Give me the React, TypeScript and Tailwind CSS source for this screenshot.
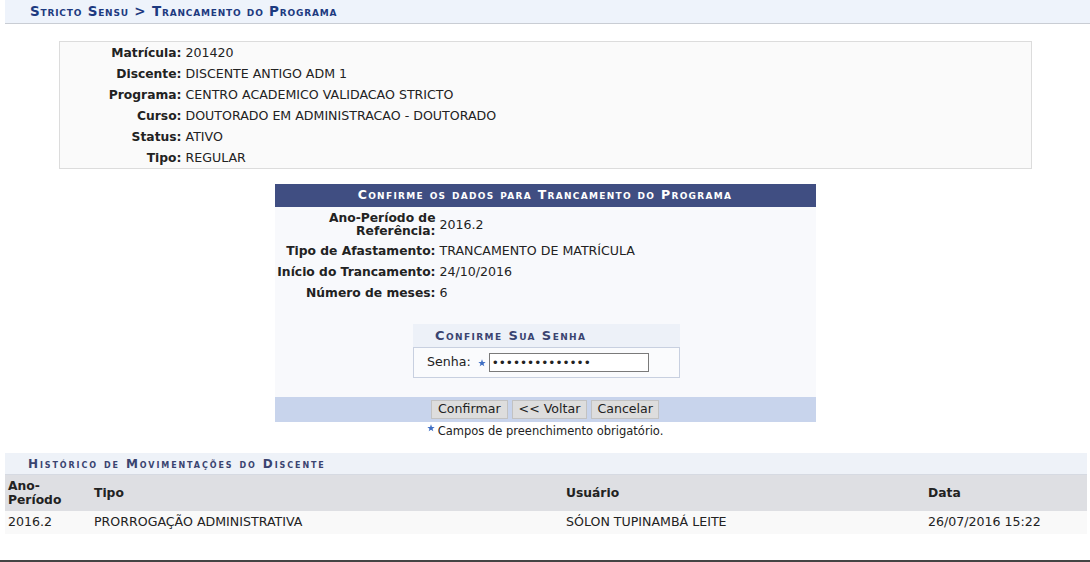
import React from "react";

const Star = ({ className = "" }: { className?: string }) => (
  <svg viewBox="0 0 10 10" className={className} width="8" height="8">
    <path d="M5 0.4 L6.2 3.6 L9.6 3.7 L6.9 5.8 L7.9 9.2 L5 7.2 L2.1 9.2 L3.1 5.8 L0.4 3.7 L3.8 3.6 Z" fill="#3f6fc4" />
  </svg>
);

const infoRows: [string, string][] = [
  ["Matrícula:", "201420"],
  ["Discente:", "DISCENTE ANTIGO ADM 1"],
  ["Programa:", "CENTRO ACADEMICO VALIDACAO STRICTO"],
  ["Curso:", "DOUTORADO EM ADMINISTRACAO - DOUTORADO"],
  ["Status:", "ATIVO"],
  ["Tipo:", "REGULAR"],
];

export default function App() {
  return (
    <div
      className="h-[562px] flex flex-col bg-white text-[12.6px] text-[#222]"
      style={{ fontFamily: '"DejaVu Sans", Verdana, sans-serif' }}
    >
      {/* Title bar */}
      <div className="ml-[5px] h-[24px] bg-[#eef3fb] border-b border-[#c9cdd4] flex items-center pl-[25px]">
        <span className="text-[13.5px] font-bold text-[#1d3a80] [font-variant:small-caps] tracking-[0.8px]">
          Stricto Sensu &gt; Trancamento do Programa
        </span>
      </div>

      <div className="mx-[5px] flex flex-col items-center">
        {/* Info box */}
        <div className="mt-[17px] w-[973px] bg-[#fafafa] border border-[#dcdcdc] pt-[1px] h-[128px]">
          {infoRows.map(([l, v]) => (
            <div key={l} className="h-[21px] flex items-center">
              <div className="w-[122px] text-right font-bold text-[12.3px]">{l}</div>
              <div className="pl-[4px]">{v}</div>
            </div>
          ))}
        </div>

        {/* Form */}
        <div className="mt-[15px] w-[541px] bg-[#f8f9fc] flex flex-col">
          <div className="h-[23px] bg-[#404e82] flex items-center justify-center">
            <span className="text-[12.5px] font-bold text-white [font-variant:small-caps] tracking-[1.3px]">
              Confirme os dados para Trancamento do Programa
            </span>
          </div>
          <div className="flex flex-col pt-[2px]">
            <div className="flex items-center py-[3px]">
              <div className="w-[161px] text-right font-bold text-[12.3px] leading-[13px]">
                Ano-Período de
                <br />
                Referência:
              </div>
              <div className="pl-[4px]">2016.2</div>
            </div>
            {[
              ["Tipo de Afastamento:", "TRANCAMENTO DE MATRÍCULA"],
              ["Início do Trancamento:", "24/10/2016"],
              ["Número de meses:", "6"],
            ].map(([l, v]) => (
              <div key={l} className="h-[21px] flex items-center">
                <div className="w-[161px] text-right font-bold text-[12.3px] whitespace-nowrap">{l}</div>
                <div className="pl-[4px]">{v}</div>
              </div>
            ))}
          </div>

          {/* Password box */}
          <div className="mt-[20px] self-center ml-[3px] w-[267px] flex flex-col">
            <div className="h-[23px] bg-[#edf1f8] flex items-center pl-[22px]">
              <span className="text-[13px] font-bold text-[#3a4470] [font-variant:small-caps] tracking-[1.4px]">
                Confirme Sua Senha
              </span>
            </div>
            <div className="h-[31px] border border-[#c8d0e0] bg-[#fafbfd] flex items-center pl-[13px]">
              <span>Senha:</span>
              <Star className="ml-[7px] mr-[3px]" />
              <input
                type="password"
                readOnly
                defaultValue="12345678901234"
                className="w-[160px] h-[19px] border border-[#7a7a7a] bg-white px-[2px] text-[12px] outline-none"
              />
            </div>
          </div>

          {/* Footer */}
          <div className="mt-[19px] h-[25px] bg-[#c8d4ec] flex items-center justify-center gap-[4px]">
            <button className="h-[19px] px-[6px] bg-[#dddddd] border border-[#c2c2c2] text-[12.6px] text-[#222] leading-none">
              Confirmar
            </button>
            <button className="h-[19px] px-[6px] bg-[#dddddd] border border-[#c2c2c2] text-[12.6px] text-[#222] leading-none">
              &lt;&lt; Voltar
            </button>
            <button className="h-[19px] px-[5px] bg-[#dddddd] border border-[#c2c2c2] text-[12.6px] text-[#222] leading-none">
              Cancelar
            </button>
          </div>
        </div>
        <div className="mt-[1px] flex items-start text-[11.5px]">
          <Star className="mt-[1px] mr-[3px]" />
          <span>Campos de preenchimento obrigatório.</span>
        </div>
      </div>

      {/* Histórico */}
      <div className="mt-[13px] ml-[5px] mr-[3px] flex flex-col">
        <div className="h-[22px] bg-[#eef2f8] border-b border-[#d6dae2] flex items-center pl-[23px]">
          <span className="text-[12px] font-bold text-[#3a4470] [font-variant:small-caps] tracking-[1.9px]">
            Histórico de Movimentações do Discente
          </span>
        </div>
        <div className="h-[36px] bg-[#dedfe3] grid grid-cols-[86px_472px_362px_1fr] items-center font-bold text-[12.3px] pl-[3px]">
          <div className="leading-[14px]">
            Ano-
            <br />
            Período
          </div>
          <div>Tipo</div>
          <div>Usuário</div>
          <div>Data</div>
        </div>
        <div className="h-[23px] bg-[#f9f9f9] grid grid-cols-[86px_472px_362px_1fr] items-center pl-[3px]">
          <div>2016.2</div>
          <div>PRORROGAÇÃO ADMINISTRATIVA</div>
          <div>SÓLON TUPINAMBÁ LEITE</div>
          <div>26/07/2016 15:22</div>
        </div>
      </div>

      <div className="flex-1" />
      <div className="h-[2px] bg-[#444]" />
    </div>
  );
}
